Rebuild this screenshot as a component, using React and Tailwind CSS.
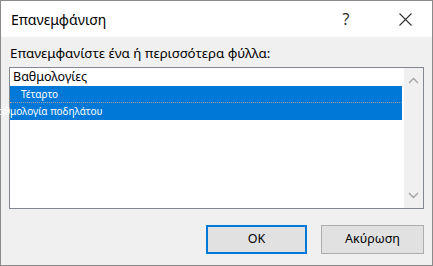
import React from "react";

const font = { fontFamily: '"Noto Sans", "Open Sans", sans-serif' };

const Chevron = ({ up }) => (
  <svg width="11" height="7" viewBox="0 0 11 7" className="text-[#a3a3a3]">
    <path
      d={up ? "M1 6 L5.5 1.5 L10 6" : "M1 1 L5.5 5.5 L10 1"}
      fill="none"
      stroke="currentColor"
      strokeWidth="1.4"
    />
  </svg>
);

export default function App() {
  return (
    <div
      className="w-[433px] h-[266px] bg-[#f0f0f0] border border-[#8a8a8a] flex flex-col overflow-visible text-black"
      style={font}
    >
      <div className="h-[36px] bg-white flex items-center shrink-0">
        <span className="ml-[10px] text-[14px] flex-1">Επανεμφάνιση</span>
        <span className="w-[44px] text-center text-[16px] text-[#333] mr-[14px]">?</span>
        <span className="w-[46px] flex justify-center mr-[4px]">
          <svg width="13" height="13" viewBox="0 0 13 13">
            <path d="M0.5 0.5 L12.5 12.5 M12.5 0.5 L0.5 12.5" stroke="#333" strokeWidth="1.1" />
          </svg>
        </span>
      </div>

      <div className="flex flex-col px-[8px] pt-[8px] flex-1">
        <div className="text-[13.3px] leading-[16px] ml-[1px]">
          Επανεμφανίστε ένα ή περισσότερα φύλλα:
        </div>
        <div className="mt-[6px] h-[142px] bg-white border border-[#828790] flex">
          <div className="flex-1 flex flex-col mr-[2px]">
            <div className="h-[18px] text-[12.5px] leading-[18px] pl-[3px]">Βαθμολογίες</div>
            <div className="h-[17px] bg-[#0078d7] text-white text-[10px] leading-[17px] pl-[11px] border-b border-dotted border-[#9a9a9a]">
              Τέταρτο
            </div>
            <div className="h-[17px] bg-[#0078d7] text-white text-[10px] leading-[17px] whitespace-nowrap overflow-visible">
              <span className="inline-block ml-[-12px]">αθμολογία ποδηλάτου</span>
            </div>
          </div>
          <div className="w-[19px] bg-[#f0f0f0] flex flex-col items-center justify-between py-[9px]">
            <Chevron up />
            <Chevron />
          </div>
        </div>

        <div className="flex justify-end gap-[14px] mt-[16px]">
          <button className="w-[101px] h-[29px] bg-[#e1e1e1] border-2 border-[#0078d7] text-[12.5px]">
            OK
          </button>
          <button className="w-[103px] h-[29px] bg-[#e1e1e1] border border-[#adadad] text-[12.5px]">
            Ακύρωση
          </button>
        </div>
      </div>
    </div>
  );
}
